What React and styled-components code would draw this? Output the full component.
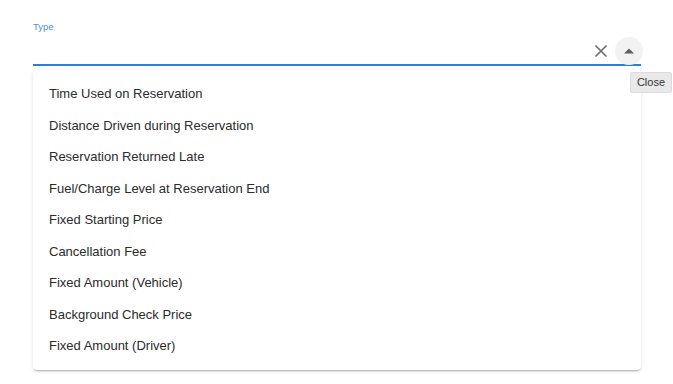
import React from 'react';
import styled, { createGlobalStyle } from 'styled-components';

const Global = createGlobalStyle`
	html, body {
		margin:0;
		padding:0;
		background:#fff;
		font-family:"Liberation Sans", Arial, sans-serif;
	}
`;

const Page = styled.div`
	width:673px;
	height:384px;
	position:relative;
	overflow:hidden;
	padding:21px 32px 0 33px;
	box-sizing:border-box;
`;
const Field = styled.div`
	position:relative;
	width:608px;
`;
const Label = styled.label`
	display:block;
	font-size:9.5px;
	color:#4a8ef0;
	line-height:12px;
	height:12px;
`;
const InputRow = styled.div`
	display:flex;
	align-items:center;
	height:31px;
	border-bottom:2px solid #2f7be6;
`;
const Input = styled.input`
	flex:1;
	border:none;
	outline:none;
	background:transparent;
	font:inherit;
`;
const ClearBtn = styled.button`
	width:24px;
	height:24px;
	padding:0;
	border:none;
	background:transparent;
	display:flex;
	align-items:center;
	justify-content:center;
	margin-right:2px;
	margin-top:4px;
`;
const PopupBtn = styled.button`
	width:28px;
	height:28px;
	padding:0;
	border:none;
	border-radius:50%;
	background:#f2f2f2;
	display:flex;
	align-items:center;
	justify-content:center;
	margin-right:-2px;
	margin-top:4px;
`;
const Tooltip = styled.div`
	position:absolute;
	right:-31px;
	top:51px;
	background:#e9e9e9;
	border:1px solid #dcdcdc;
	color:#333;
	font-size:11px;
	padding:3px 6px 4px;
	line-height:12px;
	border-radius:2px;
	z-index:2;
`;
const Paper = styled.ul`
	list-style:none;
	margin:4px 0 0;
	padding:8px 0;
	background:#fff;
	border-radius:4px;
	box-shadow:0 2px 2px -1px rgba(0,0,0,.28), 0 1px 4px rgba(0,0,0,.1);
	width:608px;
`;
const Option = styled.li`
	font-size:13px;
	line-height:19.5px;
	padding:6px 16px;
	color:#2b2b2b;
	cursor:pointer;
`;

const options = [
	'Time Used on Reservation',
	'Distance Driven during Reservation',
	'Reservation Returned Late',
	'Fuel/Charge Level at Reservation End',
	'Fixed Starting Price',
	'Cancellation Fee',
	'Fixed Amount (Vehicle)',
	'Background Check Price',
	'Fixed Amount (Driver)',
];

export default function App() {
	return (
		<>
			<Global />
			<Page>
				<Field>
					<Label>Type</Label>
					<InputRow>
						<Input />
						<ClearBtn aria-label="Clear">
							<svg width="14" height="14" viewBox="0 0 14 14">
								<path d="M1.5 1.5L12.5 12.5M12.5 1.5L1.5 12.5" stroke="#6b6b6b" strokeWidth="1.6" />
							</svg>
						</ClearBtn>
						<PopupBtn aria-label="Close">
							<svg width="10" height="6" viewBox="0 0 10 6">
								<path d="M0 5.5L5 0.5L10 5.5Z" fill="#5f5f5f" />
							</svg>
						</PopupBtn>
					</InputRow>
					<Tooltip>Close</Tooltip>
					<Paper>
						{options.map(o => <Option key={o}>{o}</Option>)}
					</Paper>
				</Field>
			</Page>
		</>
	);
}
